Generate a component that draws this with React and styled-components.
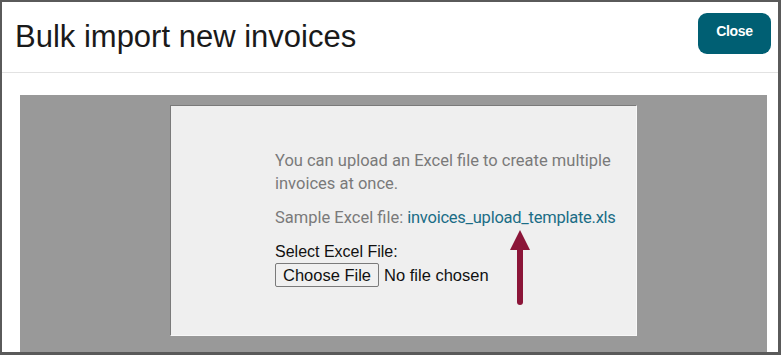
import React from 'react';
import styled, { createGlobalStyle } from 'styled-components';

const GlobalStyle = createGlobalStyle`
    html, body {
        margin: 0;
        padding: 0;
        background: #ffffff;
    }
    * {
        box-sizing: border-box;
    }
`;

const Dialog = styled.div`
    width: 781px;
    height: 355px;
    display: flex;
    flex-direction: column;
    border: 2px solid #5a5a5a;
    border-bottom-width: 3px;
    border-right-width: 3px;
    background: #ffffff;
    overflow: hidden;
`;

const Header = styled.div`
    display: flex;
    justify-content: space-between;
    align-items: center;
    height: 71px;
    padding: 0 7px 0 13px;
    border-bottom: 1px solid #e2e2e2;
    flex-shrink: 0;
`;

const Title = styled.h1`
    margin: 0;
    font-family: 'Liberation Sans', Arial, sans-serif;
    font-size: 31px;
    font-weight: 400;
    color: #1a1a1a;
`;

const CloseButton = styled.button`
    width: 73px;
    height: 41px;
    margin-bottom: 8px;
    border: none;
    border-radius: 9px;
    background: #005f73;
    color: #ffffff;
    font-family: 'Liberation Sans', Arial, sans-serif;
    font-size: 14px;
    font-weight: 700;
    letter-spacing: -0.3px;
    padding: 0 0 4px;
`;

const Body = styled.div`
    flex: 1;
    display: flex;
    padding: 22px 11px 0 18px;
`;

const Backdrop = styled.div`
    flex: 1;
    background: #999999;
    padding: 10px 0 0 150px;
`;

const UploadCard = styled.div`
    position: relative;
    width: 467px;
    height: 231px;
    background: #efefef;
    border: 1px solid #7a7a7a;
    border-right-color: #f8f8f8;
    border-bottom-color: #f8f8f8;
    padding: 43px 10px 0 104px;
`;

const Intro = styled.p`
    margin: 0;
    font-family: Roboto, 'Liberation Sans', sans-serif;
    font-size: 16.5px;
    line-height: 23px;
    color: #7a7a7a;
`;

const SampleRow = styled(Intro)`
    margin-top: 11px;
`;

const TemplateLink = styled.a`
    color: #1b6d86;
    text-decoration: none;
    letter-spacing: -0.25px;
`;

const Label = styled.div`
    margin-top: 13px;
    font-family: 'Liberation Sans', Arial, sans-serif;
    font-size: 16px;
    line-height: 19px;
    color: #111111;
`;

const FileRow = styled.div`
    display: flex;
    align-items: center;
    gap: 5px;
    margin-top: 2px;
    font-family: 'Liberation Sans', Arial, sans-serif;
    font-size: 16.5px;
    color: #111111;
`;

const ChooseButton = styled.span`
    display: inline-block;
    height: 24px;
    padding: 1px 7px 0;
    border: 1px solid #7a7a7a;
    border-radius: 2px;
    background: #f0f0f0;
    line-height: 21px;
`;

const Pointer = styled.svg`
    position: absolute;
    left: 338px;
    top: 123px;
`;

const App = () => (
    <>
        <GlobalStyle />
        <Dialog>
            <Header>
                <Title>Bulk import new invoices</Title>
                <CloseButton>Close</CloseButton>
            </Header>
            <Body>
                <Backdrop>
                    <UploadCard>
                        <Intro>
                            You can upload an Excel file to create multiple
                            <br />
                            invoices at once.
                        </Intro>
                        <SampleRow>
                            Sample Excel file: <TemplateLink href="#">invoices_upload_template.xls</TemplateLink>
                        </SampleRow>
                        <Label>Select Excel File:</Label>
                        <FileRow>
                            <ChooseButton>Choose File</ChooseButton>
                            <span>No file chosen</span>
                        </FileRow>
                        <Pointer width="22" height="78" viewBox="0 0 22 78">
                            <path d="M11 1 L21 21 L1 21 Z" fill="#8b1538" />
                            <line x1="11" y1="18" x2="11" y2="73" stroke="#8b1538" strokeWidth="6" strokeLinecap="round" />
                        </Pointer>
                    </UploadCard>
                </Backdrop>
            </Body>
        </Dialog>
    </>
);

export default App;
